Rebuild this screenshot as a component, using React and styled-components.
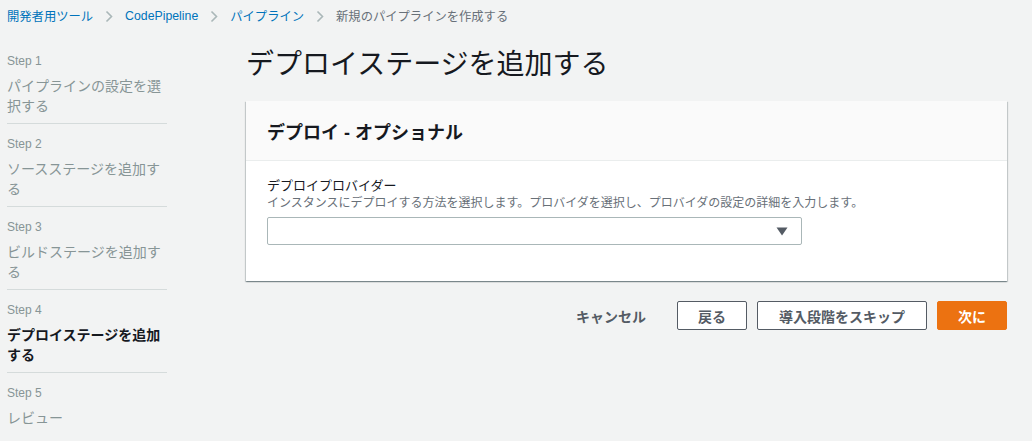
import React from "react";
import styled, { createGlobalStyle } from "styled-components";

const GlobalStyle = createGlobalStyle`
  html, body {
    margin: 0;
    padding: 0;
    background: #f2f3f3;
  }
  body {
    font-family: "Liberation Sans", "Noto Sans CJK JP", sans-serif;
    color: #16191f;
  }
`;

const Page = styled.div`
  width: 1032px;
  height: 441px;
  overflow: hidden;
`;

const Breadcrumbs = styled.nav`
  display: flex;
  align-items: center;
  gap: 12px;
  height: 32px;
  padding-left: 7px;
  font-size: 12.3px;
`;

const Crumb = styled.span`
  color: ${(p) => (p.$current ? "#687078" : "#0073bb")};
  white-space: nowrap;
`;

const Chevron = () => (
  <svg width="8" height="13" viewBox="0 0 8 13">
    <path d="M1.5 1.5 L6.5 6.5 L1.5 11.5" fill="none" stroke="#aab7b8" strokeWidth="1.6" />
  </svg>
);

const Body = styled.div`
  display: flex;
  padding-left: 7px;
`;

const Sidebar = styled.ol`
  list-style: none;
  margin: 0;
  padding: 9px 0 0;
  width: 160px;
  flex-shrink: 0;
`;

const StepItem = styled.li`
  padding: 12px 0 7px;
  border-bottom: ${(p) => (p.$last ? "none" : "1px solid #d5dbdb")};
`;

const StepLabel = styled.div`
  font-size: 12px;
  line-height: 16px;
  color: #879596;
  margin-bottom: 7px;
`;

const StepText = styled.div`
  font-size: 14px;
  line-height: 20px;
  color: ${(p) => (p.$active ? "#16191f" : "#879596")};
  font-weight: ${(p) => (p.$active ? 700 : 400)};
`;

const Main = styled.main`
  margin-left: 79px;
  width: 761px;
`;

const Title = styled.h1`
  margin: 15px 0 18px;
  font-size: 28px;
  line-height: 36px;
  font-weight: 400;
  color: #16191f;
`;

const Panel = styled.section`
  background: #fff;
  box-shadow: 0 1px 1px 0 rgba(0, 28, 36, 0.3), 1px 1px 1px 0 rgba(0, 28, 36, 0.15),
    -1px 1px 1px 0 rgba(0, 28, 36, 0.15);
`;

const PanelHeader = styled.div`
  height: 59px;
  display: flex;
  align-items: center;
  padding: 0 21px;
  background: #fafafa;
  border-bottom: 1px solid #eaeded;
`;

const PanelTitle = styled.h2`
  margin: 0;
  font-size: 18px;
  font-weight: 700;
`;

const PanelBody = styled.div`
  padding: 16px 21px 36px;
`;

const FieldLabel = styled.div`
  font-size: 13px;
  line-height: 18px;
  color: #16191f;
`;

const FieldHint = styled.div`
  font-size: 12px;
  line-height: 16px;
  color: #687078;
  margin-bottom: 6px;
`;

const Select = styled.div`
  width: 535px;
  height: 28px;
  box-sizing: border-box;
  border: 1px solid #aab7b8;
  border-radius: 2px;
  background: #fff;
  display: flex;
  align-items: center;
  justify-content: flex-end;
  padding-right: 13px;
`;

const Actions = styled.div`
  display: flex;
  justify-content: flex-end;
  align-items: center;
  gap: 10px;
  margin-top: 20px;
`;

const Button = styled.button`
  height: 29px;
  box-sizing: border-box;
  padding: 0 20px;
  font-family: inherit;
  font-size: 14px;
  font-weight: 700;
  border-radius: 2px;
  cursor: pointer;
  border: 1px solid ${(p) => (p.$variant === "primary" ? "#ec7211" : p.$variant === "link" ? "transparent" : "#545b64")};
  background: ${(p) => (p.$variant === "primary" ? "#ec7211" : p.$variant === "link" ? "transparent" : "#fff")};
  color: ${(p) => (p.$variant === "primary" ? "#fff" : "#545b64")};
  min-width: ${(p) => (p.$wide ? "170px" : "69px")};
`;

const steps = [
  { label: "Step 1", text: "パイプラインの設定を選択する" },
  { label: "Step 2", text: "ソースステージを追加する" },
  { label: "Step 3", text: "ビルドステージを追加する" },
  { label: "Step 4", text: "デプロイステージを追加する", active: true },
  { label: "Step 5", text: "レビュー" },
];

export default function App() {
  return (
    <Page>
      <GlobalStyle />
      <Breadcrumbs>
        <Crumb>開発者用ツール</Crumb>
        <Chevron />
        <Crumb>CodePipeline</Crumb>
        <Chevron />
        <Crumb>パイプライン</Crumb>
        <Chevron />
        <Crumb $current>新規のパイプラインを作成する</Crumb>
      </Breadcrumbs>
      <Body>
        <Sidebar>
          {steps.map((s, i) => (
            <StepItem key={s.label} $last={i === steps.length - 1}>
              <StepLabel>{s.label}</StepLabel>
              <StepText $active={s.active}>{s.text}</StepText>
            </StepItem>
          ))}
        </Sidebar>
        <Main>
          <Title>デプロイステージを追加する</Title>
          <Panel>
            <PanelHeader>
              <PanelTitle>デプロイ - オプショナル</PanelTitle>
            </PanelHeader>
            <PanelBody>
              <FieldLabel>デプロイプロバイダー</FieldLabel>
              <FieldHint>
                インスタンスにデプロイする方法を選択します。プロバイダを選択し、プロバイダの設定の詳細を入力します。
              </FieldHint>
              <Select>
                <svg width="12" height="9" viewBox="0 0 12 9">
                  <path d="M0.5 0.5 H11.5 L6 8.5 Z" fill="#545b64" />
                </svg>
              </Select>
            </PanelBody>
          </Panel>
          <Actions>
            <Button $variant="link">キャンセル</Button>
            <Button>戻る</Button>
            <Button $wide>導入段階をスキップ</Button>
            <Button $variant="primary">次に</Button>
          </Actions>
        </Main>
      </Body>
    </Page>
  );
}
